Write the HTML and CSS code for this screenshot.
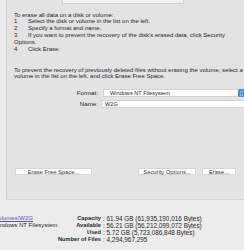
FILE: index.html
```html
<!DOCTYPE html>
<html lang="en">
<head>
    <meta charset="UTF-8">
    <title>Erase</title>
    <link rel="stylesheet" href="styles.css">
</head>
<body>
    <!-- Erase tab content -->
    <div class="erase-box">
        <div class="tab-strip"></div>

        <div class="steps">
            <div>To erase all data on a disk or volume:</div>
            <div><span class="num">1</span>Select the disk or volume in the list on the left.</div>
            <div><span class="num">2</span>Specify a format and name.</div>
            <div><span class="num">3</span>If you want to prevent the recovery of the disk&rsquo;s erased data, click Security</div>
            <div>Options.</div>
            <div><span class="num">4</span>Click Erase.</div>
        </div>

        <div class="free-space-note">
            <div>To prevent the recovery of previously deleted files without erasing the volume, select a</div>
            <div>volume in the list on the left, and click Erase Free Space.</div>
        </div>

        <div class="erase-form">
            <label class="form-label">Format:</label>
            <div class="popup">
                <span>Windows NT Filesystem</span>
                <span class="stepper">
                    <svg width="5" height="7" viewBox="0 0 5 7">
                        <path d="M1 2.6 L2.5 1.2 L4 2.6 M1 4.4 L2.5 5.8 L4 4.4" fill="none" stroke="#fff" stroke-width="0.8"/>
                    </svg>
                </span>
            </div>
            <label class="form-label">Name:</label>
            <div class="text-field">W2G</div>
        </div>

        <div class="button-row">
            <button class="btn btn-free">Erase Free Space...</button>
            <button class="btn btn-security">Security Options...</button>
            <button class="btn btn-erase">Erase...</button>
        </div>
    </div>

    <!-- Volume info -->
    <div class="volume-info">
        <div class="volume-name">
            <a href="javascript:void(0)">/Volumes/W2G</a>
            <div>Windows NT Filesystem</div>
        </div>
        <div class="stats">
            <span class="stat-label">Capacity</span><span class="stat-value">: 61.94 GB (61,935,190,016 Bytes)</span>
            <span class="stat-label">Available</span><span class="stat-value">: 56.21 GB (56,212,099,072 Bytes)</span>
            <span class="stat-label">Used</span><span class="stat-value">: 5.72 GB (5,723,086,848 Bytes)</span>
            <span class="stat-label">Number of Files</span><span class="stat-value">: 4,294,967,295</span>
        </div>
    </div>
</body>
</html>
```

FILE: styles.css
```css
* {
    box-sizing: border-box;
    margin: 0;
    padding: 0;
}

body {
    width: 244px;
    height: 250px;
    overflow: hidden;
    font-family: 'Liberation Sans', Arial, sans-serif;
    font-size: 6px;
    line-height: 6.8px;
    color: #262626;
    background-color: #ececec;
}

/* Erase panel */
.erase-box {
    display: flex;
    flex-direction: column;
    width: 240px;
    height: 200px;
    margin-left: 6px;
    padding-left: 7px;
    background-color: #e3e3e3;
    border-left: 1px solid #d3d3d3;
    border-bottom: 1px solid #d3d3d3;
    white-space: nowrap;
}

.tab-strip {
    width: 122px;
    height: 4px;
    margin-left: 48px;
    background-color: #f1f1f1;
    border: 1px solid #d0d0d0;
    border-top: none;
}

.steps {
    margin-top: 7.6px;
}

.num {
    display: inline-block;
    width: 14px;
}

.free-space-note {
    margin-top: 14.2px;
}

/* Format / Name form */
.erase-form {
    display: grid;
    grid-template-columns: 84px 1fr;
    column-gap: 4px;
    row-gap: 3px;
    align-items: center;
    margin-top: 9px;
}

.form-label {
    text-align: right;
    font-size: 6.2px;
}

.popup,
.text-field {
    display: flex;
    align-items: center;
    height: 8px;
    background-color: #fff;
    border: 1px solid #d2d2d2;
    border-right: none;
    font-size: 5.6px;
}

.popup {
    justify-content: space-between;
    padding-left: 6px;
    margin-left: 1px;
}

.text-field {
    margin-left: -1px;
    padding-left: 3px;
}

.stepper {
    display: flex;
    align-items: center;
    justify-content: center;
    width: 7px;
    height: 8px;
    margin-right: 1px;
    background-color: #3c8cf2;
    border-radius: 1.5px;
}

/* Buttons */
.button-row {
    display: flex;
    margin-top: 60px;
    padding-right: 10px;
}

.btn {
    height: 7px;
    font-family: inherit;
    font-size: 5.8px;
    line-height: 6px;
    color: #333;
    background-color: #fff;
    border: 1px solid #d6d6d6;
}

.btn-free {
    width: 77px;
    margin-left: 1px;
}

.btn-security {
    width: 58px;
    margin-left: auto;
}

.btn-erase {
    width: 34px;
    margin-left: 6px;
}

/* Volume info */
.volume-info {
    display: flex;
    padding-top: 15px;
    font-size: 6px;
    line-height: 7px;
    white-space: nowrap;
}

.volume-name {
    width: 64px;
    margin-left: -7px;
}

.volume-name a {
    color: #5b4fd0;
}

.stats {
    display: grid;
    grid-template-columns: auto auto;
    column-gap: 2px;
    margin-left: 1px;
}

.stat-label {
    font-weight: bold;
    font-size: 5.7px;
    text-align: right;
}

.stat-value {
    font-size: 6.4px;
}
```
